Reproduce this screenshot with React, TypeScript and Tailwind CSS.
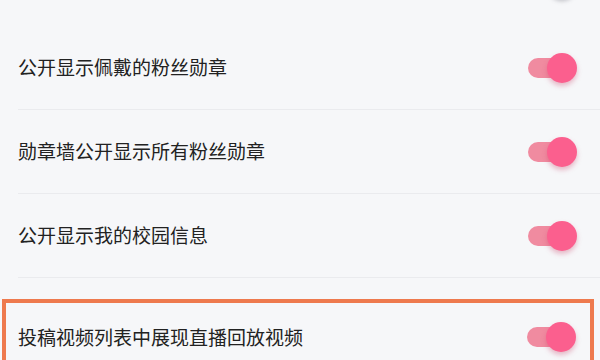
import React from "react";

function Toggle() {
  return (
    <div className="relative w-[49px] h-[30px] shrink-0">
      <div className="absolute left-0 top-[5px] w-[40px] h-[20px] rounded-full bg-[#f08ba0]" />
      <div className="absolute right-0 top-0 w-[30px] h-[30px] rounded-full bg-[#fb5f8e] shadow-[0_3px_5px_rgba(200,60,100,0.35)]" />
    </div>
  );
}

const rows = ["公开显示佩戴的粉丝勋章", "勋章墙公开显示所有粉丝勋章", "公开显示我的校园信息"];

export default function App() {
  return (
    <div
      className="w-[600px] h-[360px] overflow-hidden bg-[#f6f7f9] text-[#222]"
      style={{ fontFamily: '"Noto Sans CJK SC", "Noto Sans", sans-serif' }}
    >
      <div className="flex flex-col">
        <div className="relative h-[26px]">
          <div className="absolute right-[24px] -top-[32px] w-[28px] h-[30px] rounded-full bg-[#f6f7f9] shadow-[0_3px_4px_rgba(90,90,100,0.35)]" />
        </div>
        {rows.map((label, i) => (
          <div key={i} className="ml-[18px] h-[84px] flex items-center justify-between pr-[23px] border-b border-[#eaebee]">
            <span className="text-[19px]">{label}</span>
            <Toggle />
          </div>
        ))}
        <div className="mt-[21px] ml-[2px] w-[592px] border-[4px] border-[#ee7a4e]">
          <div className="h-[68px] flex items-center justify-between pl-[12px] pr-[14px]">
            <span className="text-[19px]">投稿视频列表中展现直播回放视频</span>
            <Toggle />
          </div>
        </div>
      </div>
    </div>
  );
}
